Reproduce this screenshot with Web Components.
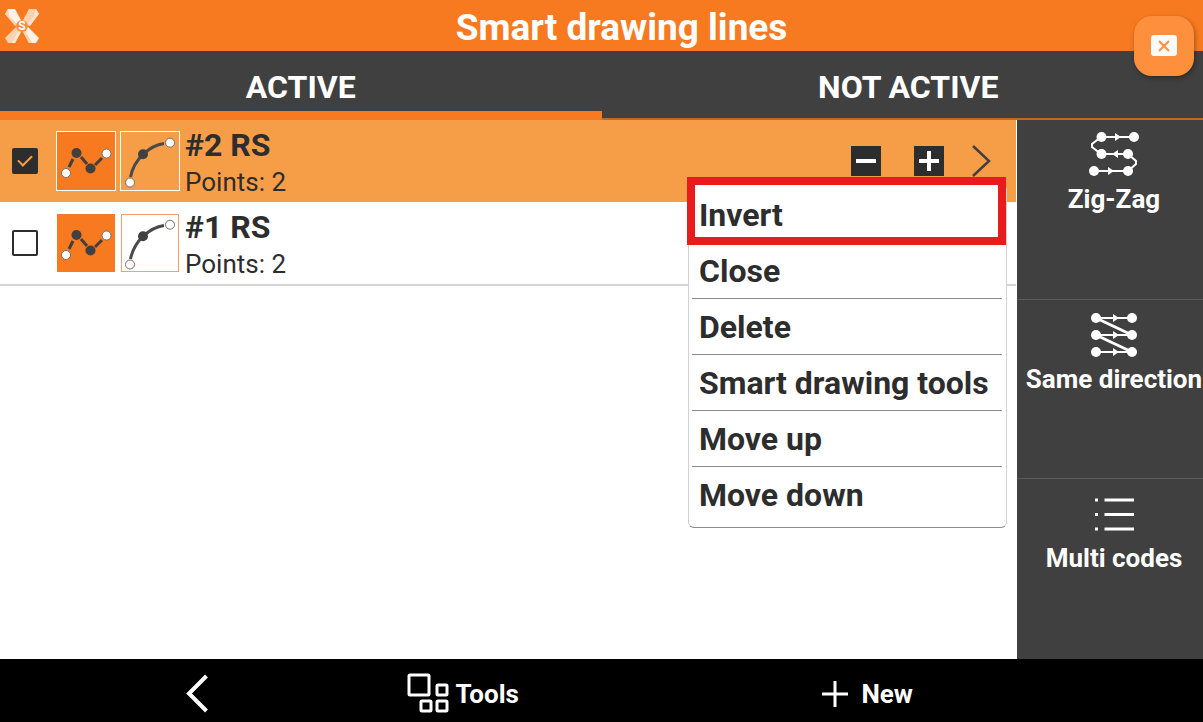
<!DOCTYPE html>
<html lang="en">
<head>
<meta charset="utf-8">
<meta name="viewport" content="width=device-width, initial-scale=1">
<title>Smart drawing lines</title>
<style>
  html, body { height: 100%; margin: 0; }
  body { font-family: Roboto, "Open Sans", sans-serif; color: #2d2d2d; background: #fff; }
</style>
</head>
<body>
<drawing-app></drawing-app>

<script>
const RESET = `
  *, *::before, *::after { box-sizing: border-box; }
  button { font: inherit; color: inherit; background: none; border: 0; padding: 0; margin: 0; cursor: pointer; }
  svg { display: block; flex: none; }
`;

function define(name, html, setup) {
  const template = document.createElement('template');
  template.innerHTML = html;
  customElements.define(name, class extends HTMLElement {
    constructor() {
      super();
      this.attachShadow({ mode: 'open' }).append(template.content.cloneNode(true));
    }
    connectedCallback() { if (setup) setup(this, this.shadowRoot); }
  });
}

define('app-header', `
  <style>${RESET}
    :host { display: flex; align-items: center; height: 51px; padding-left: 4px; background: #f77a20; color: #fff; }
    h1 { flex: 1; margin: 0; padding-top: 4px; text-align: center; font-size: 37px; line-height: 40px; font-weight: 700; white-space: nowrap; }
  </style>
  <svg width="36" height="36" viewBox="0 0 36 36" role="img" aria-label="Logo">
    <path d="M4 1h7l7 13-5 4L1 6z" fill="#fef1e6"/>
    <path d="M1 6l3-5 1 7 9 9-3 1z" fill="#fcd2ae"/>
    <path d="M32 1h-7l-7 13 5 4L35 6z" fill="#fcd2ae"/>
    <path d="M35 6l-3-5-2 7-7 9 3 1z" fill="#fde3cc"/>
    <path d="M4 35h7l7-13-5-4L1 30z" fill="#fcd2ae"/>
    <path d="M11 35l7-13-2-2-8 15z" fill="#fde9d8"/>
    <path d="M32 35h-7l-7-13 5-4 12 12z" fill="#fef1e6"/>
    <path d="M25 35l-7-13 2-2 8 15z" fill="#fcd2ae"/>
    <circle cx="18" cy="18" r="6" fill="#f88f45"/>
    <text x="18" y="22" text-anchor="middle" font-size="12" font-weight="700" fill="#fff">S</text>
  </svg>
  <h1><slot></slot></h1>
`);

define('tab-bar', `
  <style>${RESET}
    :host { display: grid; grid-template-columns: 1fr 1fr; height: 69px; background: #404040; color: #fff; }
    button { font-size: 32px; line-height: 36px; font-weight: 700; padding-top: 3px; box-shadow: inset 0 -2px #c9661f; }
    button[aria-selected=true] { box-shadow: inset 0 -9px #f77a20; }
    button:last-child { padding-left: 12px; }
  </style>
  <button role="tab" aria-selected="true">ACTIVE</button>
  <button role="tab" aria-selected="false">NOT ACTIVE</button>
`, host => host.setAttribute('role', 'tablist'));

define('line-row', `
  <style>${RESET}
    :host { display: flex; align-items: center; height: 82px; padding-left: 12px; --frame: #fff; }
    :host([selected]) { background: #f69d47; }
    :host(:not([selected])) { height: 84px; border-bottom: 2px solid #d4d4d4; }
    input { appearance: none; flex: none; display: grid; place-items: center; width: 26px; height: 26px; margin: 0 18px 0 0; border: 2px solid #2d2d2d; border-radius: 2px; }
    input:checked { background: #2d2d2d; }
    input:checked::before { content: ""; width: 14px; height: 8px; border: solid #f69d47; border-width: 0 0 2px 2px; transform: translateY(-2px) rotate(-45deg); }
    .tile { width: 60px; height: 60px; margin-right: 4px; }
    .inner { display: none; }
    :host(:not([selected])) .inner { display: block; }
    .text { flex: 1; padding: 4px 0 0 1px; }
    h2 { margin: 0; font-size: 32px; line-height: 38px; font-weight: 700; }
    p { margin: 0; font-size: 26px; line-height: 36px; }
    .tools { display: none; align-items: center; padding-right: 24px; }
    :host([selected]) .tools { display: flex; }
    .tools button { margin-left: 33px; }
    .tools button:last-child { margin-left: 28px; }
  </style>
  <input type="checkbox">
  <button class="tile" aria-label="Polyline"><svg width="60" height="60" viewBox="0 0 60 60">
    <rect x=".5" y=".5" width="59" height="59" fill="#f77a20" stroke="var(--frame)"/>
    <path d="M13 36l4-8M25 26l6 7M39 34l7-7" stroke="#404040" stroke-width="3" fill="none"/>
    <circle cx="20.500" cy="22" r="5" fill="#404040"/><circle cx="34.500" cy="37.500" r="5" fill="#404040"/>
    <circle cx="10" cy="42" r="4.500" fill="#fff" stroke="#77706a"/><circle cx="50.500" cy="22.500" r="4.500" fill="#fff" stroke="#77706a"/>
  </svg></button>
  <button class="tile" aria-label="Arc"><svg width="60" height="60" viewBox="0 0 60 60">
    <rect x=".5" y=".5" width="59" height="59" fill="none" stroke="var(--frame)"/>
    <rect class="inner" x="1.500" y="1.500" width="57" height="57" fill="none" stroke="#f9a06a"/>
    <path d="M10.500 46Q13 33 23 23.300Q33 14 44 12.500" stroke="#4a4a4a" stroke-width="3" fill="none"/>
    <circle cx="23" cy="23.300" r="5" fill="#404040"/>
    <circle cx="10" cy="51.500" r="4.500" fill="#fff" stroke="#77706a"/><circle cx="50" cy="11.700" r="4.500" fill="#fff" stroke="#77706a"/>
  </svg></button>
  <label class="text"><h2></h2><p></p></label>
  <div class="tools">
    <button aria-label="Remove"><svg width="30" height="30" viewBox="0 0 30 30"><path fill="#2d2d2d" d="M0 0h30v30H0z"/><path d="M5 15h20" stroke="#fff" stroke-width="4"/></svg></button>
    <button aria-label="Add"><svg width="30" height="30" viewBox="0 0 30 30"><path fill="#2d2d2d" d="M0 0h30v30H0z"/><path d="M5 15h20M15 5v20" stroke="#fff" stroke-width="4"/></svg></button>
    <button aria-label="More"><svg width="20" height="34" viewBox="0 0 20 34"><path d="M1 2l16 15L1 32" fill="none" stroke="#404040" stroke-width="2.500"/></svg></button>
  </div>
`, (host, root) => {
  root.querySelector('h2').textContent = host.getAttribute('name');
  root.querySelector('p').textContent = 'Points: ' + host.getAttribute('points');
  const box = root.querySelector('input');
  box.id = 'pick';
  box.checked = host.hasAttribute('selected');
  root.querySelector('label').htmlFor = 'pick';
});

define('context-menu', `
  <style>${RESET}
    :host { display: block; padding: 2px 4px 4px 3px; background: #fff; border: 1px solid #d2d2d2; border-bottom-color: #8c8c8c; border-radius: 6px; }
    button { position: relative; display: block; width: 100%; height: 56px; padding: 0 7px; text-align: left; font-size: 32px; line-height: 36px; font-weight: 700; white-space: nowrap; border-bottom: 1px solid #8c8c8c; }
    button:last-child { border-bottom: 0; }
    .marked::after { content: ""; position: absolute; inset: -10px -4px -3px -5px; border: 8px solid #e81c1c; }
  </style>
  <button role="menuitem" class="marked">Invert</button>
  <button role="menuitem">Close</button>
  <button role="menuitem">Delete</button>
  <button role="menuitem">Smart drawing tools</button>
  <button role="menuitem">Move up</button>
  <button role="menuitem">Move down</button>
`, host => host.setAttribute('role', 'menu'));

define('side-action', `
  <style>${RESET}
    :host { display: flex; border-bottom: 1px solid #5c5c5c; }
    :host(:last-child) { border-bottom: 0; }
    button { flex: 1; display: flex; flex-direction: column; align-items: center; gap: 6px; padding: 10px 0 0 8px; font-size: 26px; line-height: 30px; font-weight: 700; white-space: nowrap; }
  </style>
  <button><slot name="icon"></slot><span><slot></slot></span></button>
`);

define('side-bar', `
  <style>${RESET}
    :host { display: grid; grid-template-rows: 1fr 1fr 1fr; width: 186px; background: #404040; color: #fff; }
  </style>
  <side-action>
    <svg slot="icon" width="52" height="48" viewBox="0 0 52 48" fill="#fff">
      <path d="M13 7h33M13 24h27M6 41h34M13 7L4 14v3l9 7M40 24l8 7v3l-8 7" fill="none" stroke="#fff" stroke-width="2"/>
      <circle cx="13.500" cy="7" r="5"/><circle cx="46" cy="7" r="5"/><circle cx="13.500" cy="24" r="5"/><circle cx="40" cy="24" r="5"/><circle cx="6" cy="41" r="5"/><circle cx="40" cy="41" r="5"/>
      <path d="M27 3l6 4-6 4zM30 20l-6 4 6 4zM20 37l6 4-6 4z"/>
    </svg>Zig-Zag</side-action>
  <side-action>
    <svg slot="icon" width="52" height="48" viewBox="0 0 52 48" fill="#fff">
      <path d="M8 8h36M8 25h36M8 42h36" stroke="#fff" stroke-width="2"/>
      <path d="M8 8l36 17M8 25l36 17" stroke="#fff" stroke-width="3"/>
      <circle cx="8" cy="8" r="5"/><circle cx="44" cy="8" r="5"/><circle cx="8" cy="25" r="5"/><circle cx="44" cy="25" r="5"/><circle cx="8" cy="42" r="5"/><circle cx="44" cy="42" r="5"/>
      <path d="M25 4l6 4-6 4zM25 21l6 4-6 4zM25 38l6 4-6 4z"/>
    </svg>Same direction</side-action>
  <side-action>
    <svg slot="icon" width="52" height="48" viewBox="0 0 52 48">
      <path d="M16.500 11h29.500M16.500 25.500h29.500M16.500 40h29.500M7 11h3M7 25.500h3M7 40h3" stroke="#fff" stroke-width="3"/>
    </svg>Multi codes</side-action>
`);

define('bottom-bar', `
  <style>${RESET}
    :host { display: grid; grid-template-columns: 394fr 136fr 670fr; justify-items: center; height: 63px; background: #000; color: #fff; padding-top: 7px; }
    button { display: flex; align-items: center; gap: 6px; font-size: 26px; line-height: 30px; font-weight: 700; }
    button:last-child { gap: 12px; }
  </style>
  <button aria-label="Back"><svg width="24" height="40" viewBox="0 0 24 40"><path d="M21.500 2L4 19.500 21.500 37" fill="none" stroke="#fff" stroke-width="4"/></svg></button>
  <button><svg width="42" height="42" viewBox="0 0 42 42" fill="none" stroke="#fff" stroke-width="3">
    <rect x="2" y="2" width="20" height="20" rx="1"/><rect x="30" y="12" width="10" height="10" rx="1"/><rect x="14" y="28" width="10" height="10" rx="1"/><rect x="30" y="28" width="10" height="10" rx="1"/>
  </svg>Tools</button>
  <button><svg width="28" height="28" viewBox="0 0 28 28"><path d="M1 14h26M14 1v26" stroke="#fff" stroke-width="3"/></svg>New</button>
`);

define('close-bubble', `
  <style>${RESET}
    :host { display: block; }
    button { display: grid; place-items: center; width: 60px; height: 60px; border-radius: 18px; background: #fd8f3d; box-shadow: 1px 2px 5px rgba(0,0,0,.35); }
  </style>
  <button aria-label="Close window"><svg width="26" height="22" viewBox="0 0 26 22"><rect width="26" height="21" rx="3" fill="#fafafa"/><path d="M8 6l10 10M18 6L8 16" stroke="#fd8f3d" stroke-width="2"/></svg></button>
`);

define('drawing-app', `
  <style>${RESET}
    :host { position: relative; display: flex; flex-direction: column; min-height: 100%; overflow: hidden; }
    main { flex: 1; display: flex; }
    .list { position: relative; flex: 1; min-width: 0; border-right: 1px solid #fff; }
    context-menu { position: absolute; top: 64px; right: 9px; width: 319px; }
    close-bubble { position: absolute; top: 16px; right: 9px; }
  </style>
  <app-header>Smart drawing lines</app-header>
  <tab-bar></tab-bar>
  <main>
    <section class="list">
      <line-row selected name="#2 RS" points="2"></line-row>
      <line-row name="#1 RS" points="2"></line-row>
      <context-menu></context-menu>
    </section>
    <side-bar></side-bar>
  </main>
  <bottom-bar></bottom-bar>
  <close-bubble></close-bubble>
`);
</script>
</body>
</html>
